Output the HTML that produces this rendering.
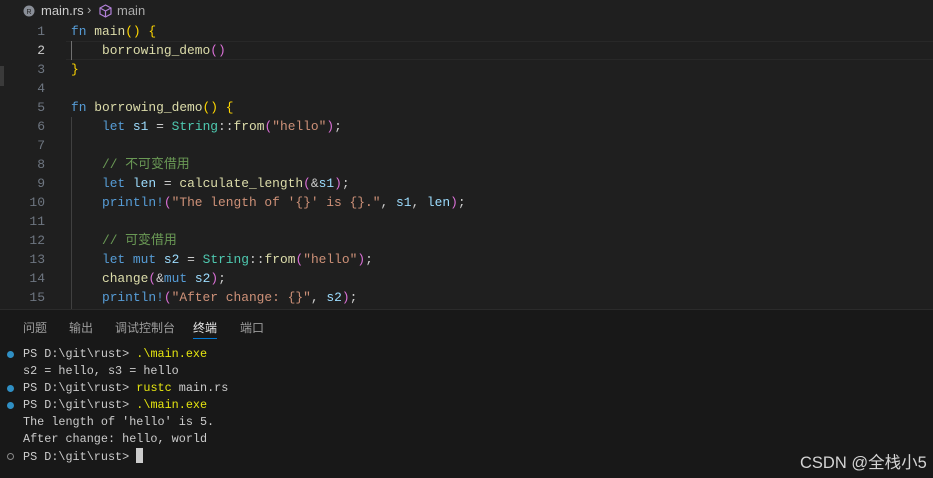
<!DOCTYPE html>
<html><head><meta charset="utf-8"><style>
body{margin:0;width:933px;height:477px;background:#1f1f1f;overflow:hidden;position:relative;font-family:"Liberation Mono","Noto Sans CJK SC",monospace}
.bc{position:absolute;left:0;top:0;height:22px;font:13px "Liberation Sans",sans-serif;color:#ccc}
.code{position:absolute;top:22px;left:0;width:933px}
.l{height:19px;line-height:19px;font-size:12.9px;white-space:pre;position:relative}
.n{position:absolute;left:0;width:45px;text-align:right;color:#6e7681;font-size:13px}
.t{position:absolute;left:71px;color:#ccc}
.k{color:#569cd6}.f{color:#dcdcaa}.ty{color:#4ec9b0}.s{color:#ce9178}.v{color:#9cdcfe}.c{color:#6a9955}.y{color:#ffd700}.p{color:#da70d6}.b{color:#179fff}.m{color:#569cd6}
.guide{position:absolute;left:71px;width:1px;background:#404040}
.panel{position:absolute;left:0;top:309px;width:933px;height:168px;background:#181818;border-top:1px solid #2b2b2b}
.tabs{position:absolute;top:9px;left:23px;font:12px "Liberation Sans","Noto Sans CJK SC",sans-serif;color:#9d9d9d}
.tabs span{position:absolute;white-space:nowrap}
.term{position:absolute;top:36px;left:0}
.tl{height:17px;line-height:17px;font-size:11.8px;white-space:pre;color:#ccc;position:relative;padding-left:23px}
.dot{position:absolute;left:7px;top:5px;width:7px;height:7px;border-radius:50%;background:#2f8fc4}
.dot.o{background:none;border:1.5px solid #888;width:5px;height:5px}
.ye{color:#e5e510}
</style></head><body>
<div class="bc">
<svg style="position:absolute;left:23px;top:5px" width="12" height="12" viewBox="0 0 12 12"><circle cx="6" cy="6" r="5.5" fill="#8a8f98"/><text x="6" y="9" font-size="7" text-anchor="middle" fill="#1f1f1f" font-family="Liberation Sans">R</text></svg>
<span style="position:absolute;left:41px;top:3px">main.rs</span>
<span style="position:absolute;left:87px;top:2px;color:#aaa">›</span>
<svg style="position:absolute;left:99px;top:4px" width="13" height="14" viewBox="0 0 13 14"><path d="M6.5 1L12 4v6l-5.5 3L1 10V4z M1 4l5.5 3L12 4 M6.5 7v6" fill="none" stroke="#b180d7" stroke-width="1.2"/></svg>
<span style="position:absolute;left:117px;top:3px;color:#aaa">main</span>
</div>
<div style="position:absolute;left:0;top:66px;width:4px;height:20px;background:#3a3a3a"></div>
<div style="position:absolute;left:66px;top:41px;width:867px;height:19px;border-top:1px solid #282828;border-bottom:1px solid #282828;box-sizing:border-box"></div>
<div class="guide" style="top:41px;height:19px;background:#707070"></div>
<div class="guide" style="top:117px;height:192px"></div>
<div class="code">
<div class="l"><span class="n">1</span><span class="t"><span class="k">fn</span> <span class="f">main</span><span class="y">()</span> <span class="y">{</span></span></div>
<div class="l"><span class="n" style="color:#ccc">2</span><span class="t">    <span class="f">borrowing_demo</span><span class="p">()</span></span></div>
<div class="l"><span class="n">3</span><span class="t"><span class="y">}</span></span></div>
<div class="l"><span class="n">4</span></div>
<div class="l"><span class="n">5</span><span class="t"><span class="k">fn</span> <span class="f">borrowing_demo</span><span class="y">()</span> <span class="y">{</span></span></div>
<div class="l"><span class="n">6</span><span class="t">    <span class="k">let</span> <span class="v">s1</span> = <span class="ty">String</span>::<span class="f">from</span><span class="p">(</span><span class="s">"hello"</span><span class="p">)</span>;</span></div>
<div class="l"><span class="n">7</span></div>
<div class="l"><span class="n">8</span><span class="t">    <span class="c">// 不可变借用</span></span></div>
<div class="l"><span class="n">9</span><span class="t">    <span class="k">let</span> <span class="v">len</span> = <span class="f">calculate_length</span><span class="p">(</span>&amp;<span class="v">s1</span><span class="p">)</span>;</span></div>
<div class="l"><span class="n">10</span><span class="t">    <span class="m">println!</span><span class="p">(</span><span class="s">"The length of '{}' is {}."</span>, <span class="v">s1</span>, <span class="v">len</span><span class="p">)</span>;</span></div>
<div class="l"><span class="n">11</span></div>
<div class="l"><span class="n">12</span><span class="t">    <span class="c">// 可变借用</span></span></div>
<div class="l"><span class="n">13</span><span class="t">    <span class="k">let</span> <span class="k">mut</span> <span class="v">s2</span> = <span class="ty">String</span>::<span class="f">from</span><span class="p">(</span><span class="s">"hello"</span><span class="p">)</span>;</span></div>
<div class="l"><span class="n">14</span><span class="t">    <span class="f">change</span><span class="p">(</span>&amp;<span class="k">mut</span> <span class="v">s2</span><span class="p">)</span>;</span></div>
<div class="l"><span class="n">15</span><span class="t">    <span class="m">println!</span><span class="p">(</span><span class="s">"After change: {}"</span>, <span class="v">s2</span><span class="p">)</span>;</span></div>
</div>
<div class="panel">
<div class="tabs">
<span style="left:0">问题</span><span style="left:46px">输出</span><span style="left:92px">调试控制台</span><span style="left:170px;color:#e7e7e7">终端</span><span style="left:217px">端口</span>
<div style="position:absolute;left:170px;top:19px;width:24px;height:1px;background:#0078d4"></div>
</div>
<div class="term">
<div class="tl"><span class="dot"></span>PS D:\git\rust&gt; <span class="ye">.\main.exe</span></div>
<div class="tl">s2 = hello, s3 = hello</div>
<div class="tl"><span class="dot"></span>PS D:\git\rust&gt; <span class="ye">rustc</span> main.rs</div>
<div class="tl"><span class="dot"></span>PS D:\git\rust&gt; <span class="ye">.\main.exe</span></div>
<div class="tl">The length of 'hello' is 5.</div>
<div class="tl">After change: hello, world</div>
<div class="tl"><span class="dot o"></span>PS D:\git\rust&gt; <span style="display:inline-block;width:7px;height:15px;background:#ccc;vertical-align:-3px"></span></div>
</div>
</div>
<div style="position:absolute;left:800px;top:449px;font:16.5px 'Liberation Sans','Noto Sans CJK SC',sans-serif;color:#d4d4d4;white-space:nowrap">CSDN @全栈小5</div>
</body></html>
